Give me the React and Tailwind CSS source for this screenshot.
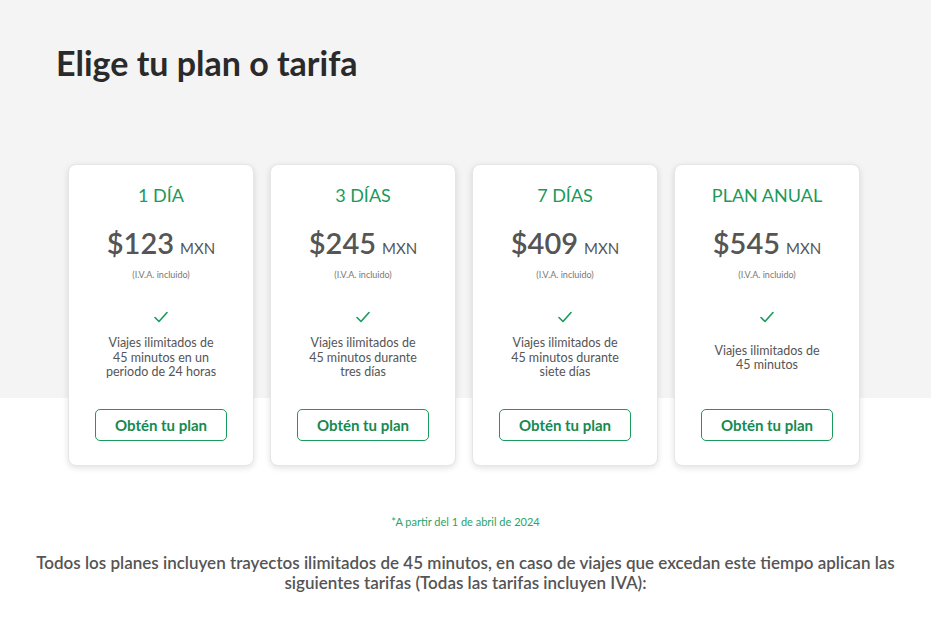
import React from 'react';

const plans = [
  { name: '1 DÍA', price: '$123', desc: ['Viajes ilimitados de', '45 minutos en un', 'periodo de 24 horas'] },
  { name: '3 DÍAS', price: '$245', desc: ['Viajes ilimitados de', '45 minutos durante', 'tres días'] },
  { name: '7 DÍAS', price: '$409', desc: ['Viajes ilimitados de', '45 minutos durante', 'siete días'] },
  { name: 'PLAN ANUAL', price: '$545', desc: ['Viajes ilimitados de', '45 minutos'] },
];

const Check = () => (
  <svg width="16" height="14" viewBox="0 0 16 14" fill="none">
    <path d="M2 7.5 L6 11.5 L14 2.5" stroke="#1a9a5c" strokeWidth="1.6" strokeLinecap="round" strokeLinejoin="round" />
  </svg>
);

const PlanCard = ({ plan }) => (
  <div className="w-[186px] h-[302px] bg-white rounded-lg border border-[#e6e6e6] shadow-[0_2px_6px_rgba(0,0,0,0.12)] flex flex-col items-center">
    <div className="mt-[19px] text-[18px] leading-[22px] text-[#1a9a5c]">{plan.name}</div>
    <div className="mt-[20px] flex items-baseline gap-[6px] text-[#555]">
      <span className="text-[29px] leading-[34px] font-semibold">{plan.price}</span>
      <span className="text-[15px] leading-[18px]">MXN</span>
    </div>
    <div className="mt-[9px] text-[9px] leading-[12px] text-[#777]">(I.V.A. incluido)</div>
    <div className="mt-[29px]"><Check /></div>
    <div className="h-[56px] mt-[6px] flex flex-col justify-center text-center text-[12.5px] leading-[14.5px] text-[#555]">
      {plan.desc.map((l) => <div key={l}>{l}</div>)}
    </div>
    <button className="mt-[23px] w-[132px] h-[32px] rounded-[5px] border border-[#1a9a5c] text-[15px] font-bold text-[#148a52]">
      Obtén tu plan
    </button>
  </div>
);

export default function App() {
  return (
    <div className="w-[931px] min-h-[620px] bg-white font-['Lato',sans-serif]">
      <div className="bg-[#f4f4f4] h-[398px] pt-[42px]">
        <h1 className="pl-[56px] text-[34px] leading-[42px] font-bold text-[#2a2a2a]">Elige tu plan o tarifa</h1>
        <div className="mt-[80px] pl-[68px] flex gap-[16px]">
          {plans.map((p) => <PlanCard key={p.name} plan={p} />)}
        </div>
      </div>
      <div className="pt-[117px] text-center">
        <div className="text-[11px] leading-[14px] text-[#2aa36a]">*A partir del 1 de abril de 2024</div>
        <p className="mt-[24px] px-[30px] text-[17px] leading-[20px] font-semibold text-[#555]">
          Todos los planes incluyen trayectos ilimitados de 45 minutos, en caso de viajes que excedan este tiempo aplican las siguientes tarifas (Todas las tarifas incluyen IVA):
        </p>
      </div>
    </div>
  );
}
